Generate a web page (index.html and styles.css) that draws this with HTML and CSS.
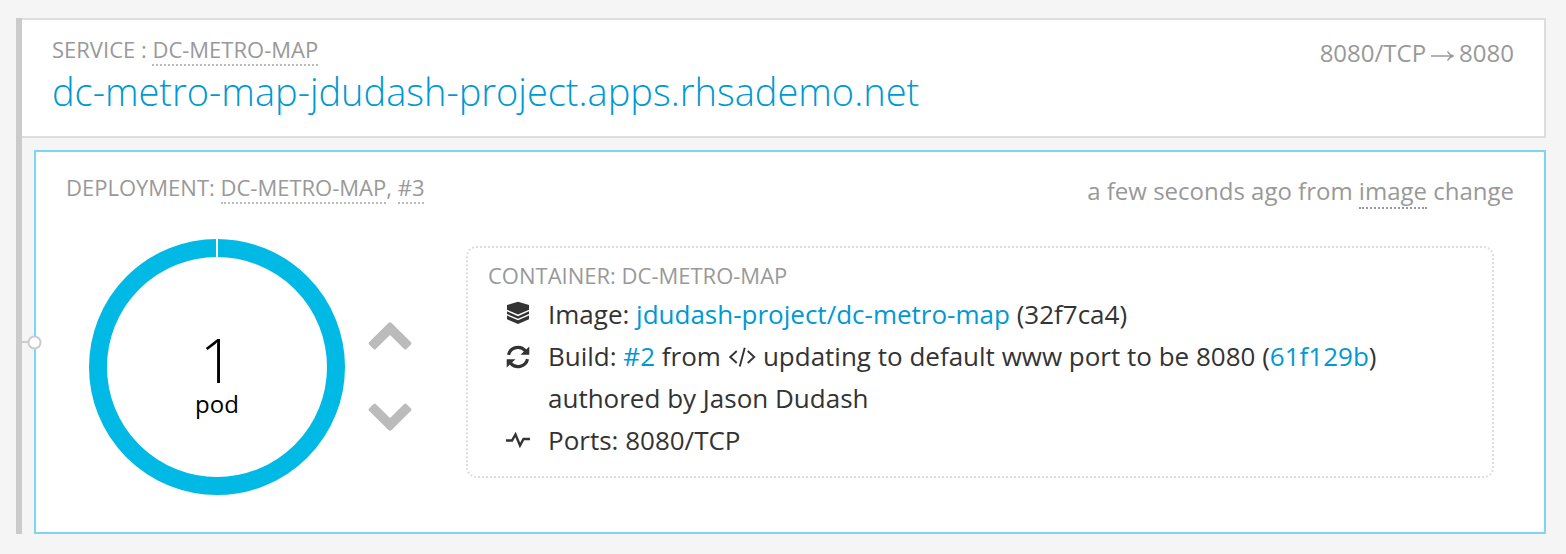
FILE: index.html
```html
<!DOCTYPE html>
<html lang="en">
<head>
<meta charset="utf-8">
<title>dc-metro-map</title>
<link rel="stylesheet" href="styles.css">
</head>
<body>
<main class="overview">
  <section class="service">
    <div>
      <div class="label">SERVICE : <a class="dotted">DC-METRO-MAP</a></div>
      <h1 class="route">dc-metro-map-jdudash-project.apps.rhsademo.net</h1>
    </div>
    <div class="meta ports">8080/TCP<svg class="arrow" viewBox="0 0 24 12"><path d="M0 6H22M16.500 1.500Q18.500 5 22.500 6Q18.500 7 16.500 10.500"/></svg>8080</div>
  </section>
  <section class="deployment">
    <svg class="connector" viewBox="0 0 20 16"><path d="M0 8H6"/><circle cx="12.5" cy="8.5" r="6"/></svg>
    <header class="deployment-head">
      <div class="label">DEPLOYMENT: <a class="dotted">DC-METRO-MAP</a>, <a class="dotted">#3</a></div>
      <div class="meta">a few seconds ago from <a class="dotted dark">image</a> change</div>
    </header>
    <div class="deployment-body">
      <svg class="donut" viewBox="0 0 256 256">
        <circle class="ring" cx="128" cy="128" r="119"/>
        <path class="gap" d="M128 0V20"/>
        <text class="count" x="128" y="144">1</text>
        <text class="unit" x="128" y="174">pod</text>
      </svg>
      <div class="scaler">
        <svg viewBox="0 0 44 28"><path d="M22 .2Q23 .2 23.600 1L43 20.200Q44 21.400 43 22.400L38.400 27Q37.400 28 36.200 27L22 13L7.800 27Q6.600 28 5.600 27L1 22.400Q0 21.400 1 20.200L20.400 1Q21 .2 22 .2Z"/></svg>
        <svg viewBox="0 0 44 28"><path transform="matrix(1 0 0 -1 0 28)" d="M22 .2Q23 .2 23.600 1L43 20.200Q44 21.400 43 22.400L38.400 27Q37.400 28 36.200 27L22 13L7.800 27Q6.600 28 5.600 27L1 22.400Q0 21.400 1 20.200L20.400 1Q21 .2 22 .2Z"/></svg>
      </div>
      <div class="container">
        <div class="label">CONTAINER: DC-METRO-MAP</div>
        <div class="row">
          <svg class="icon" viewBox="0 0 24 24"><path d="M12 .8L23 4V8.700L12 13.500L1 8.700V4ZM1 10.300L12 15.200L23 10.300V13L12 17.800L1 13ZM1 14.500L12 19.300L23 14.500V18.300L12 23L1 18.300Z"/></svg>
          <p>Image: <a class="link">jdudash-project/dc-metro-map</a> (32f7ca4)</p>
        </div>
        <div class="row">
          <svg class="icon refresh" viewBox="0 0 24 24"><path class="arc" d="M2.500 9.800A9.700 9.700 0 0 1 19.500 6M21.500 14.200A9.700 9.700 0 0 1 4.500 18"/><path d="M23.300 1.500V9.800H14.500ZM.7 22.500V14.200H9.500Z"/></svg>
          <p>Build: <a class="link">#2</a> from <svg class="code" viewBox="0 0 28 20"><path d="M8.500 4L2 10L8.500 16M19.500 4L26 10L19.500 16M16.500 .8L11.500 19.500"/></svg> updating to default www port to be 8080 (<a class="link">61f129b</a>)<br>authored by Jason Dudash</p>
        </div>
        <div class="row">
          <svg class="icon pulse" viewBox="0 0 24 24"><path d="M0 12.500H6L9.500 6.500L14 17.500L17.500 11H24"/></svg>
          <p>Ports: 8080/TCP</p>
        </div>
      </div>
    </div>
  </section>
</main>
</body>
</html>
```
FILE: styles.css
```css
* { box-sizing: border-box; }
body {
  margin: 0;
  padding: 18px 20px 20px 16px;
  background: #f5f5f5;
  color: #333;
  font: 26px/42px "Open Sans", sans-serif;
}
.overview {
  height: 516px;
  border-left: 6px solid #cbcbcb;
  display: flex;
  flex-direction: column;
  gap: 12px;
}
.service {
  height: 120px;
  display: flex;
  justify-content: space-between;
  padding: 14px 30px 0;
  background: #fff;
  border: 2px solid #ddd;
  border-left: 0;
}
.label { font-size: 22px; line-height: 30px; color: #999; white-space: nowrap; }
.dotted { border-bottom: 2px dotted #bbb; }
.dark { border-color: #999; }
.route {
  margin: 5px 0 0;
  font-size: 38px;
  line-height: 44px;
  font-weight: 300;
  color: #0099d3;
  white-space: nowrap;
}
.meta { font-size: 24px; line-height: 40px; color: #999; white-space: nowrap; }
.ports { margin-top: -1px; }
.arrow { width: 24px; height: 12px; margin: 0 4px 0 5px; fill: none; stroke: #999; stroke-width: 1.5; }
.deployment {
  position: relative;
  flex: 1;
  margin-left: 12px;
  padding: 18px 30px 0;
  background: #fff;
  border: 2px solid #7dd5ef;
}
.connector {
  position: absolute;
  left: -14px;
  top: 182px;
  width: 20px;
  height: 16px;
  fill: #fff;
  stroke: #cbcbcb;
  stroke-width: 2;
}
.deployment-head { display: flex; justify-content: space-between; height: 76px; }
.deployment-head .label { padding-top: 2px; }
.deployment-head .meta { padding-top: 1px; }
.deployment-body { display: flex; align-items: flex-start; }
.donut { width: 256px; height: 256px; margin: -7px 0 0 23px; }
.ring { fill: none; stroke: #00b9e4; stroke-width: 18; }
.gap { stroke: #fff; stroke-width: 2; }
.count, .unit { text-anchor: middle; fill: #000; }
.count { font-size: 60px; font-weight: 300; }
.unit { font-size: 24px; }
.scaler { display: flex; flex-direction: column; gap: 53px; margin: 76px 54px 0 23px; }
.scaler svg { width: 44px; height: 28px; fill: #bbb; }
.container {
  width: 1028px;
  height: 232px;
  padding: 12px 20px;
  border: 2px dotted #ddd;
  border-radius: 10px;
}
.container .label { margin-bottom: 3px; }
.row { display: flex; padding-left: 18px; gap: 18px; }
.row p { margin: 0; white-space: nowrap; }
.icon { width: 24px; height: 24px; margin-top: 8px; fill: #333; }
.refresh { margin-top: 10px; }
.arc { fill: none; stroke: #333; stroke-width: 3.2; }
.pulse { margin-top: 9px; fill: none; stroke: #333; stroke-width: 2.4; }
.code { width: 28.5px; height: 20px; margin-bottom: -1px; fill: none; stroke: #333; stroke-width: 1.9; }
.link { color: #0099d3; }
```
